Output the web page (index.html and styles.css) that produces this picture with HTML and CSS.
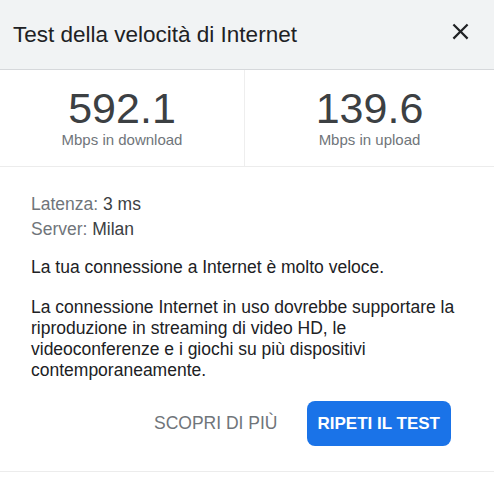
FILE: index.html
```html
<!DOCTYPE html>
<html lang="it">
<head>
<meta charset="utf-8">
<title>Test della velocità di Internet</title>
<link rel="stylesheet" href="styles.css">
</head>
<body>
<div class="dialog">
  <header class="head">
    <h1 class="title">Test della velocità di Internet</h1>
    <button class="close" aria-label="Chiudi">
      <svg viewBox="0 0 24 24" width="27" height="27"><path d="M19 6.41L17.59 5 12 10.59 6.41 5 5 6.41 10.59 12 5 17.59 6.41 19 12 13.41 17.59 19 19 17.59 13.41 12z" fill="#202124"/></svg>
    </button>
  </header>
  <section class="stats">
    <div class="stat">
      <div class="num">592.1</div>
      <div class="unit">Mbps in download</div>
    </div>
    <div class="stat">
      <div class="num">139.6</div>
      <div class="unit">Mbps in upload</div>
    </div>
  </section>
  <section class="body">
    <div class="meta">
      <div><span class="key">Latenza:</span> 3 ms</div>
      <div><span class="key">Server:</span> Milan</div>
    </div>
    <p class="verdict">La tua connessione a Internet è molto veloce.</p>
    <p class="desc">La connessione Internet in uso dovrebbe supportare la riproduzione in streaming di video HD, le videoconferenze e i giochi su più dispositivi contemporaneamente.</p>
    <div class="actions">
      <button class="btn link">SCOPRI DI PIÙ</button>
      <button class="btn primary">RIPETI IL TEST</button>
    </div>
  </section>
  <div class="foot"></div>
</div>
</body>
</html>
```

FILE: styles.css
```css
* { box-sizing: border-box; }
html, body { margin: 0; padding: 0; background: #fff; }
body { font-family: "Liberation Sans", Arial, sans-serif; color: #202124; }

.dialog { width: 494px; }

.head {
  height: 70px;
  background: #f1f3f4;
  border-bottom: 1px solid #d6d8db;
  display: flex;
  align-items: center;
  justify-content: space-between;
  padding: 0 20px 0 13px;
}
.title {
  margin: 0;
  font-size: 22.5px;
  font-weight: normal;
  color: #202124;
  line-height: 26px;
}
.close {
  border: 0;
  background: none;
  padding: 0;
  width: 27px;
  height: 27px;
  margin-top: -6px;
  display: flex;
}

.stats {
  display: grid;
  grid-template-columns: 245px 1fr;
  border-bottom: 1px solid #ececec;
}
.stat {
  text-align: center;
  padding: 15px 0 18px;
}
.stat:first-child { border-right: 1px solid #eeeeee; }
.num {
  font-size: 43px;
  line-height: 46px;
  color: #3c4043;
}
.unit {
  margin-top: 1px;
  font-size: 15px;
  line-height: 16px;
  color: #70757a;
}

.body {
  padding: 25px 24px 25px 31px;
  font-size: 17.5px;
  color: #202124;
}
.meta { line-height: 24.5px; color: #3c4043; }
.key { color: #70757a; }
.verdict { margin: 16px 0 0; line-height: 21px; }
.desc { margin: 19px 0 0; line-height: 21px; }

.actions {
  display: flex;
  justify-content: flex-end;
  gap: 19px;
  margin-top: 20px;
  padding-right: 19px;
}
.btn {
  font-family: "Liberation Sans", Arial, sans-serif;
  font-size: 17.5px;
  border: 0;
  height: 45px;
  padding: 0 10px;
  border-radius: 8px;
  background: none;
  cursor: pointer;
  white-space: nowrap;
}
.link { color: #70757a; }
.primary {
  background: #1a73e8;
  color: #fff;
  font-weight: bold;
  font-size: 17px;
  padding: 0 11px;
}

.foot { border-top: 1px solid #ececec; height: 15px; }
```
